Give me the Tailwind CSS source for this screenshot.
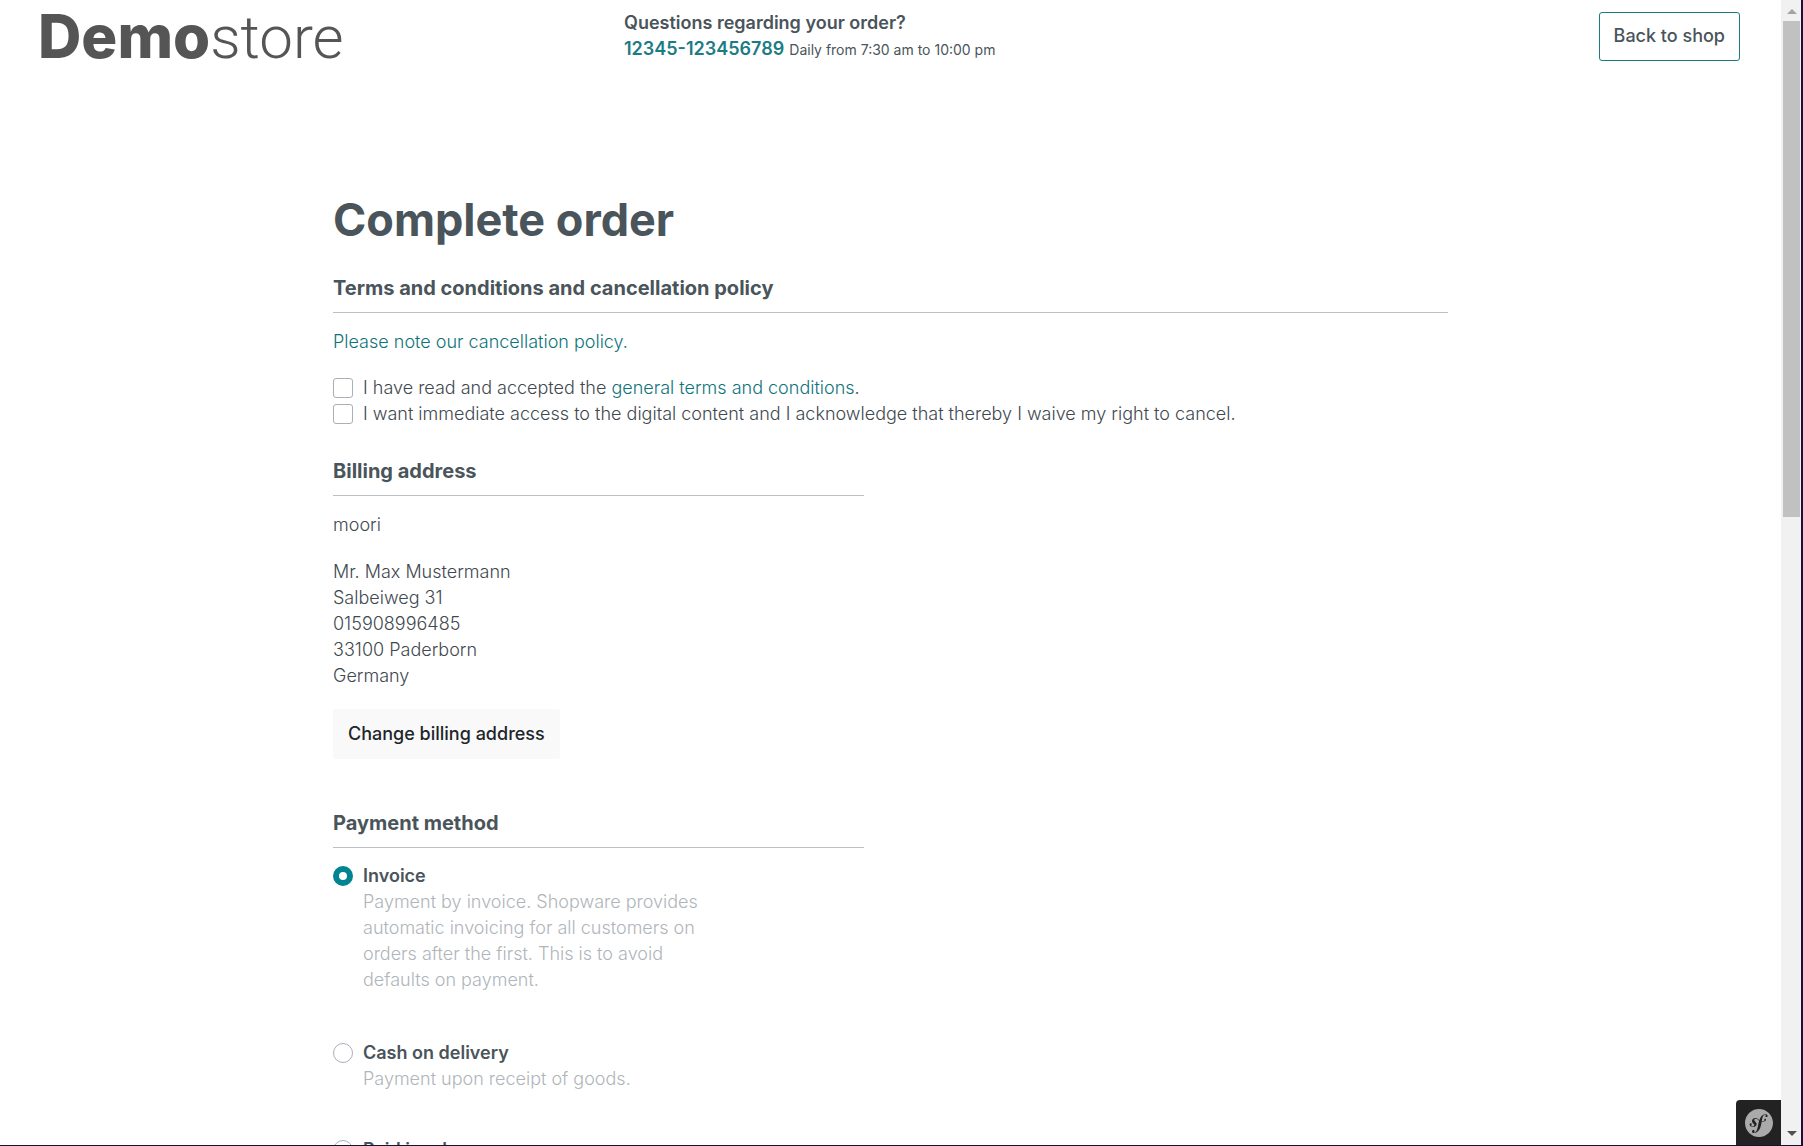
<!DOCTYPE html>
<html lang="en">
<head>
<meta charset="utf-8">
<meta name="viewport" content="width=device-width, initial-scale=1">
<title>Complete order</title>
<script src="https://cdn.jsdelivr.net/npm/@tailwindcss/browser@4"></script>
</head>
<body class="bg-white font-['Inter',sans-serif] text-[18px] font-light leading-[26px] text-[#3f4950]">
<div class="flex h-screen overflow-hidden border-r-2 border-b border-[#1b1033]">
  <div class="min-w-0 flex-1 overflow-hidden">
    <header class="flex items-start justify-between pl-[38px] pr-[41px]">
      <div class="flex flex-1">
        <a href="#" aria-label="Demostore" class="flex w-[586px] items-baseline pt-1 leading-[64px] text-[#555]"><span class="text-[60px] font-extrabold">Demo</span><span class="font-['Roboto',sans-serif] text-[60px] font-light">store</span></a>
        <div class="pt-[10px] text-[#4a545b]">
          <p class="font-semibold">Questions regarding your order?</p>
          <p><a href="tel:12345123456789" class="font-semibold text-[#1c7c84]">12345-123456789</a> <span class="text-[14px] font-normal">Daily from 7:30 am to 10:00 pm</span></p>
        </div>
      </div>
      <button type="button" class="mt-3 h-[49px] rounded-[3px] border border-[#1c7c84] px-[14px] pb-[2px] font-medium text-[#4a545b]">Back to shop</button>
    </header>

    <main class="mx-auto w-full max-w-[1115px] pt-[122px]">
      <h1 class="text-[45px] font-bold leading-[56px] text-[#4a545b]">Complete order</h1>
      <section>
        <h2 class="mt-[27px] border-b border-[#bcc1c7] pb-[11px] text-[20px] font-bold leading-[26px] text-[#4a545b]">Terms and conditions and cancellation policy</h2>
        <p class="mt-4"><a href="#" class="text-[#0f737b]">Please note our cancellation policy.</a></p>
        <div class="mt-5 flex items-center gap-[10px]">
          <input id="tos" type="checkbox" class="size-5 appearance-none rounded-[3px] border border-[#a9b0b8] bg-white">
          <label for="tos">I have read and accepted the <a href="#" class="text-[#0f737b]">general terms and conditions</a>.</label>
        </div>
        <div class="flex items-center gap-[10px]">
          <input id="waive" type="checkbox" class="size-5 appearance-none rounded-[3px] border border-[#a9b0b8] bg-white">
          <label for="waive">I want immediate access to the digital content and I acknowledge that thereby I waive my right to cancel.</label>
        </div>
      </section>
      <div class="grid grid-cols-2 gap-[53px]">
        <div>
          <section class="pt-[31px]">
            <h2 class="border-b border-[#bcc1c7] pb-[11px] text-[20px] font-bold leading-[26px] text-[#4a545b]">Billing address</h2>
            <p class="mt-4">moori</p>
            <address class="mt-[21px] not-italic">Mr. Max Mustermann<br>Salbeiweg 31<br>015908996485<br>33100 Paderborn<br>Germany</address>
            <button type="button" class="mt-5 h-[50px] rounded-[3px] bg-[#f9f9f9] px-[15px] font-medium text-[#212529]">Change billing address</button>
          </section>
          <section class="mt-[51px]">
            <h2 class="border-b border-[#bcc1c7] pb-[11px] text-[20px] font-bold leading-[26px] text-[#4a545b]">Payment method</h2>
            <div class="mt-[15px] flex gap-[10px]">
              <input id="invoice" name="payment" type="radio" checked class="mt-[3px] size-5 shrink-0 appearance-none rounded-full border border-[#a9b0b8] bg-white checked:border-[6px] checked:border-[#008490]">
              <label for="invoice"><span class="block font-semibold text-[#4a545b]">Invoice</span><span class="block w-[350px] text-[#b0b5bb]">Payment by invoice. Shopware provides automatic invoicing for all customers on orders after the first. This is to avoid defaults on payment.</span></label>
            </div>
            <div class="mt-[47px] flex gap-[10px]">
              <input id="cash" name="payment" type="radio" class="mt-[3px] size-5 shrink-0 appearance-none rounded-full border border-[#a9b0b8] bg-white">
              <label for="cash"><span class="block font-semibold text-[#4a545b]">Cash on delivery</span><span class="block text-[#b0b5bb]">Payment upon receipt of goods.</span></label>
            </div>
            <div class="mt-[45px] flex gap-[10px]">
              <input id="advance" name="payment" type="radio" class="mt-[3px] size-5 shrink-0 appearance-none rounded-full border border-[#a9b0b8] bg-white">
              <label for="advance"><span class="block font-semibold text-[#4a545b]">Paid in advance</span></label>
            </div>
          </section>
        </div>
      </div>
    </main>
  </div>

  <!-- Scrollbar -->
  <div class="flex w-5 shrink-0 flex-col items-center bg-[#f1f1f1]" aria-hidden="true">
    <svg class="h-[21px] w-5" viewBox="0 0 20 21"><path d="M6 14l5-5 5 5z" fill="#a3a3a3"/></svg>
    <div class="flex min-h-0 w-full flex-1 flex-col pr-px pl-[2px]"><div class="h-[45%] bg-[#c1c1c1]"></div></div>
    <svg class="h-[21px] w-5" viewBox="0 0 20 21"><path d="M6 7h10l-5 5z" fill="#505050"/></svg>
  </div>
</div>

<!-- Debug toolbar toggle -->
<button type="button" aria-label="Open toolbar" class="fixed right-[22px] bottom-px flex h-[45px] w-[45px] items-center justify-center rounded-tl-[4px] bg-[#222]">
  <svg class="size-7" viewBox="0 0 24 24" fill="#aaa"><path d="M24 12c0 6.628-5.372 12-12 12S0 18.628 0 12 5.372 0 12 0s12 5.372 12 12zm-6.753-7.561c-1.22.042-2.283.715-3.075 1.644-.878 1.02-1.461 2.229-1.881 3.461-.753-.614-1.332-1.414-2.539-1.761-.966-.297-2.015-.105-2.813.514-.41.319-.71.757-.861 1.254-.36 1.176.381 2.225.719 2.6l.737.79c.15.154.519.56.339 1.138-.193.631-.951 1.037-1.732.799-.348-.106-.848-.366-.734-.73.045-.15.152-.263.21-.391.052-.11.077-.194.095-.242.141-.465-.053-1.07-.551-1.223-.465-.143-.939-.03-1.125.566-.209.68.117 1.913 1.86 2.449 2.04.628 3.765-.484 4.009-1.932.153-.907-.255-1.582-1.006-2.447l-.612-.677c-.371-.37-.497-1.002-.114-1.485.324-.409.785-.584 1.539-.379 1.103.3 1.594 1.063 2.412 1.68-.338 1.11-.56 2.223-.759 3.222l-.123.746c-.585 3.07-1.033 4.757-2.194 5.726-.234.166-.57.416-1.073.434-.266.005-.352-.176-.355-.257-.006-.184.15-.271.255-.353.154-.083.39-.224.372-.674-.016-.532-.456-.994-1.094-.973-.477.017-1.203.465-1.176 1.286.028.85.819 1.485 2.012 1.444.638-.021 2.062-.281 3.464-1.949 1.633-1.911 2.09-4.101 2.434-5.706l.383-2.116c.213.024.441.042.69.048 2.032.044 3.049-1.01 3.064-1.776.01-.464-.304-.921-.744-.91-.386.009-.718.278-.806.654-.094.428.646.813.068 1.189-.41.266-1.146.452-2.184.3l.188-1.042c.386-1.976.859-4.407 2.661-4.467.132-.007.612.006.623.323.003.105-.022.134-.147.375-.115.155-.174.345-.168.537.017.504.4.836.957.816.743-.023.955-.748.945-1.119-.032-.874-.952-1.424-2.17-1.386z"/></svg>
</button>
</body>
</html>
